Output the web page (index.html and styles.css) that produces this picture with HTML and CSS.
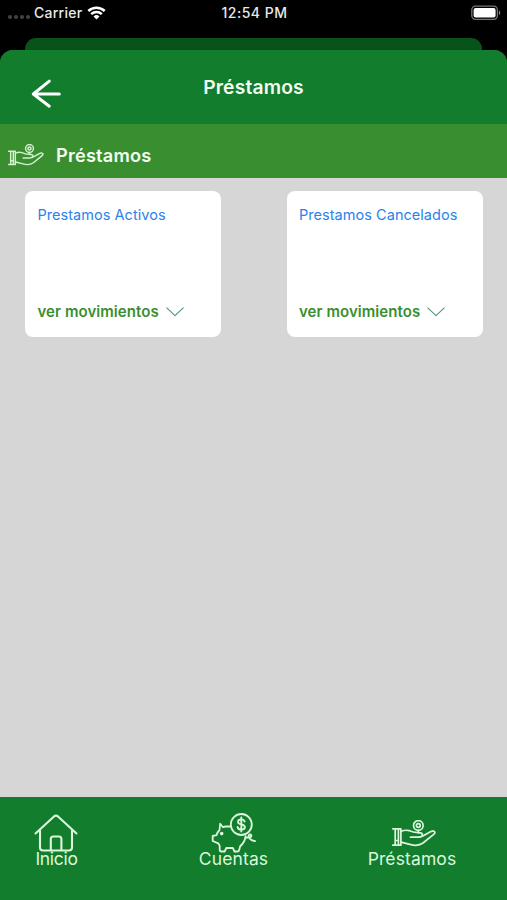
FILE: index.html
```html
<!DOCTYPE html>
<html lang="es">
<head>
  <meta charset="UTF-8" />
  <meta name="viewport" content="width=device-width, initial-scale=1.0" />
  <title>Préstamos</title>
  <link rel="stylesheet" href="styles.css">
</head>
<body>
  <svg class="symbols" aria-hidden="true">
    <symbol id="hand" viewBox="0 0 44 27">
      <circle cx="26.3" cy="5.5" r="4.8"/>
      <circle cx="26.3" cy="5.5" r="1.9"/>
      <path d="M26.3 10.4v2.2"/>
      <path d="M.7 8.8H8.9V25.2H.7M3.2 9v16M6.4 9v16M3.2 20.5h3.2"/>
      <path d="M9 11.2c3-1 5-1.5 8-.6 3 1.5 5 2 9 2 3.500 0 4.800 1 4.300 2.600-.4 1.500-2 2-4.300 2h-7.500"/>
      <path d="M30.400 16.200l8-4.500c2-1 4.500-.6 4.500.7 0 .8-.6 1.500-1.500 2.200L31 23c-2.500 1.900-5 2.400-8 2.300-4.500-.3-8-2-14-3.100"/>
    </symbol>
  </svg>

  <div class="status-bar">
    <div class="carrier">
      <span class="signal"><i></i><i></i><i></i><i></i></span>
      <span>Carrier</span>
      <svg class="wifi" viewBox="0 0 19 14">
        <path d="M1.300 5a12 12 0 0 1 16.400 0M4.200 8.200a7.700 7.700 0 0 1 10.600 0"/>
        <path class="dot" d="M6.500 10.500a4.300 4.300 0 0 1 6 0l-3 3z"/>
      </svg>
    </div>
    <span class="time">12:54 PM</span>
    <svg class="battery" viewBox="0 0 30 16">
      <rect class="shell" x=".8" y="1.2" width="25.6" height="13.2" rx="3.8"/>
      <rect class="level" x="2.6" y="3" width="22" height="9.6" rx="2"/>
      <path class="level-tip" d="M28 5.500v4.600c1.700-.7 1.700-3.900 0-4.600z"/>
    </svg>
  </div>
  <div class="back-card"></div>

  <div class="screen">
    <header>
      <svg class="back" viewBox="0 0 32 30">
        <path d="M18.300 2.200L2.300 15l16 12.200M2.300 15h26"/>
      </svg>
      <h1>Préstamos</h1>
    </header>

    <div class="section-title">
      <svg class="icon-hand"><use href="#hand"/></svg>
      <h2>Préstamos</h2>
    </div>

    <main class="cards">
      <div class="card">
        <span class="card-name">Prestamos Activos</span>
        <div class="more">
          <span>ver movimientos</span>
          <svg class="chevron" viewBox="0 0 18 10"><path d="M.8.8L9 8.700 17.200.8"/></svg>
        </div>
      </div>
      <div class="card">
        <span class="card-name">Prestamos Cancelados</span>
        <div class="more">
          <span>ver movimientos</span>
          <svg class="chevron" viewBox="0 0 18 10"><path d="M.8.8L9 8.700 17.200.8"/></svg>
        </div>
      </div>
    </main>

    <nav class="tabs">
      <div class="tab tab-home">
        <svg class="icon-home" viewBox="0 0 44 38">
          <path d="M1.500 19.500L20 2.400q2-1.600 4 0L42.500 19.500M6 16.500V33.500q0 3 3 3H35q3 0 3-3V16.500M16.800 36V25q0-2.500 2.500-2.500h5.600q2.500 0 2.500 2.500v11"/>
        </svg>
        <span>Inicio</span>
      </div>
      <div class="tab tab-accounts">
        <svg class="icon-pig" viewBox="0 0 46 40">
          <circle cx="30.300" cy="11.500" r="10.500"/>
          <path d="M19.500 13.500h-4.500c-1.200 0-2 .2-3 .7L9.200 10.700 8.500 17c-1.500 1.400-2.300 3-3 5.200L1.700 23v5l5.500 2.300c1 1 1.500 1.500 1.500 3v3.500q0 1.700 1.700 1.700h3.200L15.300 35h6.500l1.700 3.500h3.200q1.300 0 1.500-1.700l1-3.600c3-2.500 5-5.500 5.400-10"/>
          <path d="M34.600 24.500h3.600c2.500 0 3-3 .9-3-2.500 0-2.300 5.300 5 6.700"/>
          <circle class="eye" cx="10.700" cy="20.600" r="1.800"/>
          <path class="dollar" d="M33.600 8.600c-.4-1.500-1.600-2.200-3.300-2.200-2 0-3.300.9-3.300 2.500 0 3.500 6.900 1.500 6.900 5.200 0 1.700-1.500 2.600-3.600 2.600-2 0-3.400-.9-3.700-2.700M30.300 4.500v14"/>
        </svg>
        <span>Cuentas</span>
      </div>
      <div class="tab tab-loans">
        <svg class="icon-hand"><use href="#hand"/></svg>
        <span>Préstamos</span>
      </div>
    </nav>
  </div>
</body>
</html>
```
FILE: styles.css
```css
* {
  box-sizing: border-box;
}
body {
  margin: 0;
  height: 900px;
  display: flex;
  flex-direction: column;
  overflow: hidden;
  background: #000;
  color: #f2fcf2;
  font-family: Inter, sans-serif;
}
h1, h2 {
  margin: 0;
  font-weight: 600;
}
svg {
  display: block;
  fill: none;
  stroke: currentColor;
  stroke-linecap: round;
  stroke-linejoin: round;
}
.symbols {
  position: absolute;
  width: 0;
  height: 0;
}

/* status bar */
.status-bar {
  height: 38px;
  flex: none;
  display: grid;
  grid-template-columns: 1fr auto 1fr;
  align-items: start;
  padding: 4px 6px 0 8px;
  color: #e8e8e8;
  font-size: 14px;
  line-height: 18px;
  font-weight: 500;
}
.carrier {
  display: flex;
  align-items: center;
  letter-spacing: .25px;
}
.signal {
  display: flex;
  gap: 2px;
  width: 26px;
  padding-top: 8px;
}
.signal i {
  width: 4px;
  height: 4px;
  border-radius: 50%;
  background: #444;
}
.wifi {
  width: 19px;
  height: 14px;
  margin-left: 5px;
  color: #fff;
  stroke-width: 2.5;
  stroke-linecap: butt;
}
.wifi .dot {
  fill: #fff;
  stroke: none;
}
.time {
  letter-spacing: .5px;
}
.battery {
  width: 30px;
  height: 16px;
  justify-self: end;
  margin-top: 1px;
}
.shell {
  stroke: #777;
  stroke-width: 1.3;
}
.level {
  fill: #fff;
  stroke: none;
}
.level-tip {
  fill: #888;
  stroke: none;
}
.back-card {
  height: 12px;
  flex: none;
  margin: 0 25px;
  border-radius: 11px 11px 0 0;
  background: #085319;
}

/* screen */
.screen {
  flex: 1;
  display: flex;
  flex-direction: column;
  overflow: hidden;
  border-radius: 13px 13px 0 0;
  background: linear-gradient(#127d2d 60px, #d6d6d6 60px);
}
header {
  height: 74px;
  flex: none;
  display: grid;
  grid-template-columns: 1fr auto 1fr;
  background: #127d2d;
}
.back {
  width: 32px;
  height: 30px;
  margin: 29px 0 0 31px;
  color: #fff;
  stroke-width: 3;
}
h1 {
  padding-top: 25px;
  font-size: 19.3px;
  line-height: 24px;
  letter-spacing: .15px;
}
.section-title {
  height: 54px;
  flex: none;
  display: flex;
  align-items: center;
  padding: 8px 0 0 8px;
  background: #398f30;
}
.section-title .icon-hand {
  width: 36px;
  height: 22px;
  margin: -1px 12px 0 0;
  color: #d3f0cf;
  stroke-width: 1.8;
}
h2 {
  font-size: 18.2px;
  line-height: 22px;
  letter-spacing: .2px;
}
.cards {
  flex: 1;
  display: flex;
  justify-content: space-between;
  align-items: flex-start;
  padding: 12.5px 24.5px 0 25px;
}
.card {
  width: 196px;
  height: 146px;
  display: flex;
  flex-direction: column;
  justify-content: space-between;
  padding: 14px 12.5px 15px;
  border-radius: 8px;
  background: #fff;
}
.card-name {
  color: #2a82ed;
  font-size: 14.5px;
  line-height: 20px;
  letter-spacing: .04px;
  white-space: nowrap;
}
.more {
  display: flex;
  align-items: center;
  color: #398f30;
  font-size: 15px;
  line-height: 20px;
  font-weight: 600;
  letter-spacing: .07px;
}
.chevron {
  width: 18px;
  height: 10px;
  margin-left: 7px;
  color: #4b9870;
  stroke-width: 1.1;
}

/* bottom tabs */
.tabs {
  height: 103px;
  flex: none;
  display: flex;
  padding: 16px 36px 0 0;
  background: #127d2d;
}
.tab {
  display: flex;
  flex-direction: column;
  align-items: center;
  color: #dcf7dc;
  font-size: 17.5px;
  line-height: 20px;
  letter-spacing: .12px;
}
.tab-home {
  width: 113px;
  letter-spacing: -.3px;
}
.tab-accounts {
  flex: 1;
  padding-left: 1px;
}
.tab-loans {
  width: 118px;
}
.tab svg {
  flex: none;
}
.icon-home {
  width: 44px;
  height: 38px;
  margin: 1px 1px -3px 0;
  stroke-width: 2.1;
}
.icon-pig {
  width: 46px;
  height: 40px;
  margin-bottom: -4px;
  stroke-width: 1.8;
}
.icon-pig .eye {
  fill: currentColor;
  stroke: none;
}
.icon-pig .dollar {
  stroke-width: 1.9;
}
.tab-loans .icon-hand {
  width: 44px;
  height: 27px;
  margin: 7px 0 2px 4px;
  stroke-width: 1.7;
}
```
